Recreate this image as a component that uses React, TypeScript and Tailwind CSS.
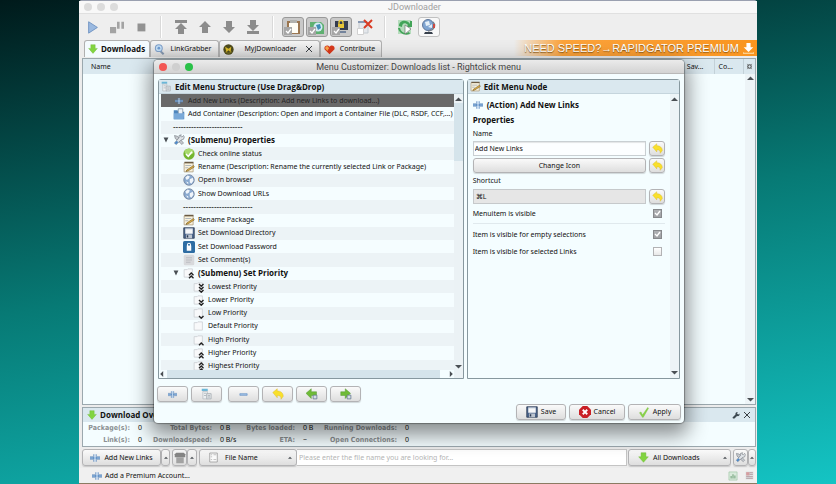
import type { ReactNode } from "react";
import clsx from "clsx";

type IconName =
  | "plus" | "minus" | "container" | "tools" | "check" | "rename" | "globe" | "disk" | "lock" | "comment"
  | "menu" | "undo" | "import" | "export" | "cancel" | "apply" | "download" | "search" | "myjd" | "heart"
  | "play" | "pause" | "stop" | "top" | "up" | "down" | "bottom" | "clipboard" | "reconnect" | "premium"
  | "remove" | "update" | "worldwide" | "trash" | "file" | "wrench" | "close" | "gear" | "chart" | "flag"
  | "priority" | "banner";

const drawings: Record<IconName, ReactNode> = {
  plus: (
    <>
      <path d="M0 6.500h16v3H0z" fill="#7fa9d6" />
      <path d="M0 6h5M0 10h5M11 6h5M11 10h5" stroke="#4a7ab2" />
      <path d="M6 2v12M10 2v12" stroke="#4f7fb8" strokeWidth="1.200" />
      <path d="M7 2h2v12H7z" fill="#b9d3ee" />
    </>
  ),
  minus: <path d="M1.500 6.500h13v3h-13z" fill="#a3c2e6" stroke="#5585c0" />,
  container: (
    <>
      <path d="M1 3h5l1 2h8v10H1z" fill="#4e86bd" />
      <path d="M7 1h6v8H7z" fill="#eef3f8" stroke="#7b8c9c" />
      <path d="M1 7h14l-1 8H1z" fill="#79a9d8" />
    </>
  ),
  tools: (
    <>
      <path d="M2 2l4 1 8 9-2 2-9-8z" fill="#c7cbd0" stroke="#737980" strokeWidth=".8" />
      <path d="M14 2l-2 2-2-1 1-2-3 1v3l-6 7 2 2 7-6 3-1 1-3z" fill="#dfe3e7" stroke="#6a7078" strokeWidth=".8" />
      <path d="M2 12l3-3 2 2-3 3z" fill="#4c88c8" />
    </>
  ),
  check: (
    <>
      <circle cx="8" cy="8" r="7.500" fill="#73b52f" />
      <ellipse cx="8" cy="5" rx="6" ry="4" fill="#a8d96d" />
      <path d="M4 8l3 3 5-6" fill="none" stroke="#fff" strokeWidth="2.200" />
    </>
  ),
  rename: (
    <>
      <path d="M1.500 2.500h12v12h-12z" fill="#f8f1dc" stroke="#a8987a" />
      <path d="M2 1h12v2H2z" fill="#6b5b44" />
      <path d="M3 6h8M3 9h4" stroke="#9aa5b1" />
      <path d="M5 12l9-6 1 2-8 5-3 1z" fill="#e3b345" stroke="#6f5727" strokeWidth=".8" />
    </>
  ),
  globe: (
    <>
      <circle cx="8" cy="8" r="7" fill="#8aaad0" stroke="#6d7d97" />
      <path d="M3 5l3-3 3 1-1 3-3 2zM9 7l4-2 1 4-3 4-2-2zM4 10l3 1v3z" fill="#f0f5fa" />
    </>
  ),
  disk: (
    <>
      <path d="M1 1h14v14H1z" fill="#4b648b" stroke="#27364f" />
      <path d="M3 2h10v7H3z" fill="#f6f7f9" />
      <path d="M3 2h10v1H3z" fill="#a9b6c8" />
      <path d="M4 10h8v5H4z" fill="#bcc4cf" />
      <path d="M5 11h2v3H5z" fill="#273752" />
    </>
  ),
  lock: (
    <>
      <rect width="16" height="16" rx="2" fill="#2e6da3" />
      <path d="M6 7V5a2 2 0 014 0v2" fill="none" stroke="#fff" strokeWidth="1.400" />
      <path d="M5 6h6v7H5z" fill="#fff" />
    </>
  ),
  comment: (
    <>
      <rect x="1" y="1" width="14" height="14" rx="2" fill="#d8d9dc" />
      <path d="M4 5h8M4 8h8M4 11h6" stroke="#b2b4b8" />
    </>
  ),
  menu: (
    <>
      <path d="M1 1h8v3H1z" fill="#6ab7d8" />
      <path d="M2.500 4.500h6v10h-6z" fill="#eceff1" stroke="#b4bbc1" />
      <path d="M7.500 7.500h6v7h-6z" fill="#dfe3e6" stroke="#a4abb1" />
      <path d="M4 7h3M4 10h3M9 10h3M9 12h3" stroke="#a6adb3" />
    </>
  ),
  undo: <path d="M1 6l6-5v3c5 0 8 3 8 7l-3 4c0-4-1-5-5-5v3z" fill="#f9e02b" stroke="#d8ba32" strokeWidth=".6" />,
  import: (
    <>
      <path d="M0 7l7-6v4h7v5H7v4z" fill="#6fbb37" stroke="#4d9430" strokeWidth=".6" />
      <path d="M9.500 9.500h5v5h-5z" fill="#d5dde6" stroke="#62768c" />
    </>
  ),
  export: (
    <>
      <path d="M14 7L7 1v4H1v5h6v4z" fill="#6fbb37" stroke="#4d9430" strokeWidth=".6" />
      <path d="M9.500 9.500h5v5h-5z" fill="#d5dde6" stroke="#62768c" />
    </>
  ),
  cancel: (
    <>
      <path d="M5 0h6l5 5v6l-5 5H5l-5-5V5z" fill="#c92026" />
      <path d="M5 5l6 6M11 5l-6 6" stroke="#fff" strokeWidth="2.400" />
    </>
  ),
  apply: <path d="M2 9l2-1 2 4L13 2l1 1-7 12H6z" fill="#8ad646" stroke="#74bd3d" strokeWidth=".6" />,
  download: <path d="M4.500 1h7v6H15l-7 8-7-8h3.500z" fill="#82d440" stroke="#6bb935" strokeWidth=".6" />,
  search: (
    <>
      <path d="M9 10l5 5" stroke="#8496ad" strokeWidth="3" />
      <circle cx="7" cy="6" r="5" fill="#c4dff5" stroke="#7f9fc8" strokeWidth="1.500" />
      <circle cx="7" cy="6" r="2" fill="#6e9bd0" />
    </>
  ),
  myjd: (
    <>
      <circle cx="8" cy="8" r="7.500" fill="#4d4a1c" />
      <path d="M3 4l5 3 4-3-1 8-3-3-3 3z" fill="#d8b929" />
      <path d="M3 11c3 3 7 3 10 0" stroke="#a5952e" fill="none" />
    </>
  ),
  heart: (
    <>
      <path d="M8 15L1 8C-1 3 5 0 8 4c3-4 9-1 7 4z" fill="#d8391c" />
      <path d="M2 7c-1-4 4-5 5-1l-2 4z" fill="#f9a648" />
    </>
  ),
  play: <path d="M3 2l10 6.500L3 15z" fill="#9ab9e0" stroke="#6b90c0" />,
  pause: <path d="M0 8h7v7H0zM8 2h3v8H8zM13 2h3v8h-3z" fill="#a3a3a3" />,
  stop: <path d="M4 4h9v9H4z" fill="#929292" />,
  top: <path d="M2 1h12v3H2zM8 4l6 6h-3v5H5v-5H2z" fill="#8c8c8c" />,
  up: <path d="M8 2l6 6h-3v6H5V8H2z" fill="#8c8c8c" />,
  down: <path d="M8 14L2 8h3V2h6v6h3z" fill="#8c8c8c" />,
  bottom: <path d="M8 12L2 6h3V1h6v5h3zM2 12h12v3H2z" fill="#8c8c8c" />,
  clipboard: (
    <>
      <path d="M2 2h13v13H2z" fill="#9b7650" />
      <path d="M4 4h9v10H4z" fill="#fffdf5" />
      <path d="M5 1h7v3H5z" fill="#b2b2ae" />
    </>
  ),
  reconnect: (
    <>
      <path d="M1 3h11l3 3v9H5l-4-4z" fill="#5fb071" />
      <circle cx="9" cy="8" r="4.500" fill="#d4ecf4" />
      <path d="M7 6l4-1 1 4-3 2z" fill="#3f8db4" />
    </>
  ),
  premium: (
    <>
      <path d="M2 2h13v9H2z" fill="#343c50" />
      <path d="M6 5V3c0-2 4-2 4 0v2" fill="none" stroke="#f2d23f" strokeWidth="1.300" />
      <path d="M5 5h6v4H5z" fill="#e5c438" />
      <path d="M5 12h8v2H5z" fill="#74849c" />
    </>
  ),
  remove: (
    <>
      <path d="M2 3h9v11H2z" fill="#e4e7eb" stroke="#c4cad0" />
      <path d="M1 2h9v2H1z" fill="#8999b2" />
      <path d="M7 1l8 8M15 1L7 9" stroke="#d93a22" strokeWidth="2" />
      <path d="M0.500 9.500h6v6h-6z" fill="#fff" stroke="#d0d0d0" />
    </>
  ),
  update: (
    <>
      <path d="M1 1h13v14H1z" fill="#b5dcbc" />
      <path d="M2 7c0-6 8-7 11-2V2h2v6H9l2-2C8 3 5 4 5 8zM3 9c1 5 6 6 9 4l1 2c-6 2-11-1-12-6z" fill="#42a458" />
      <path d="M8 6l6 4-6 5z" fill="#fff" stroke="#777" strokeWidth=".7" />
    </>
  ),
  worldwide: (
    <>
      <circle cx="7" cy="6" r="5.500" fill="#7fa5d2" stroke="#60779a" />
      <path d="M4 3l4-1 1 4-4 1zM7 8l4-3v4z" fill="#e5f0f8" />
      <path d="M12 3c4 4 0 9-5 9" fill="none" stroke="#777e89" strokeWidth="1.300" />
      <path d="M12 5h2v4h-2z" fill="#cd4b42" />
      <path d="M4 13h7l1 2H3z" fill="#38404c" />
    </>
  ),
  trash: (
    <>
      <path d="M1 3l2-2h10l2 2v4H1z" fill="#858585" />
      <path d="M3 7h10v8H3z" fill="#a2a2a2" />
    </>
  ),
  file: (
    <>
      <path d="M2.500 1.500h11v13h-11z" fill="#fafafa" stroke="#8c8c8c" />
      <path d="M4 4h2M8 4h4M4 7h2M4 11h2M8 11h4" stroke="#aaa" />
    </>
  ),
  wrench: <path d="M1 13l6-6c-1-3 2-6 5-5l-2 2 1 2 2 1 2-2c1 4-2 6-5 5l-5 5H2z" fill="#3c4850" />,
  close: <path d="M2 2l12 12M14 2L2 14" stroke="#3a3f44" strokeWidth="2" />,
  gear: (
    <>
      <circle cx="8" cy="8" r="4" fill="none" stroke="#555" strokeWidth="2.500" />
      <path d="M3 2l2 3M13 2l-2 3M3 14l2-3M13 14l-2-3" stroke="#555" strokeWidth="1.500" />
    </>
  ),
  chart: (
    <>
      <path d="M1.500 1.500h13v13h-13z" fill="#d9eadc" stroke="#9cc5a2" />
      <path d="M4 12V8h2v4zM7 12V5h2v7zM10 12V7h2v5z" fill="#82ae8a" />
    </>
  ),
  flag: (
    <>
      <path d="M1 1h14v14H1z" fill="#dde3e3" />
      <path d="M2 2h6v6H2z" fill="#d59da0" />
      <path d="M8 3h6M8 6h6M2 10h12M2 13h12" stroke="#b1939a" strokeWidth="1.500" />
    </>
  ),
  priority: <path d="M1.500 3.500h4l1-1h6v11h-11z" fill="#f8f9fa" stroke="#c8ccd0" />,
  banner: (
    <>
      <path d="M5 0h6v6h4l-7 7-7-7h4z" fill="#fff" />
      <path d="M0 13v2h16v-2" fill="none" stroke="#ffe2ae" strokeWidth="1.500" />
    </>
  ),
};

function Icon({ name, className = "size-3" }: { name: IconName; className?: string }) {
  return (
    <svg viewBox="0 0 16 16" className={clsx("shrink-0", className)} aria-hidden="true">
      {drawings[name]}
    </svg>
  );
}

// Folder with up to three chevrons; negative levels point down
function PriorityIcon({ level }: { level: number }) {
  const count = Math.abs(level);
  return (
    <svg viewBox="0 0 16 16" className="size-3 shrink-0" aria-hidden="true">
      {drawings.priority}
      {Array.from({ length: count }, (_, i) => {
        const y = 15 - i * 4;
        return (
          <path
            key={i}
            d={level > 0 ? `M8 ${y}l3-3 3 3` : `M8 ${y - 3}l3 3 3-3`}
            fill="none"
            stroke="#222"
            strokeWidth="1.800"
          />
        );
      })}
    </svg>
  );
}

const arrowPaths = {
  up: "M0 7h10L5 2z",
  down: "M0 3h10L5 8z",
  left: "M7 0v10L2 5z",
  right: "M3 0v10l5-5z",
  open: "M1 1h8L5 9z",
};

function Arrow({ dir, className = "size-2" }: { dir: keyof typeof arrowPaths; className?: string }) {
  return (
    <svg viewBox="0 0 10 10" className={clsx("shrink-0", className)} aria-hidden="true">
      <path d={arrowPaths[dir]} fill="#4a4f54" />
    </svg>
  );
}

interface TreeRow {
  text: string;
  depth: 0 | 1 | 2;
  icon?: IconName;
  priority?: number;
  submenu?: boolean;
  separator?: boolean;
}

const separatorText = "---------------------------";

const rows: TreeRow[] = [
  { text: "Add New Links (Description: Add new Links to download...)", depth: 0, icon: "plus" },
  { text: "Add Container (Description: Open and import a Container File (DLC, RSDF, CCF,...)", depth: 0, icon: "container" },
  { text: separatorText, depth: 0, separator: true },
  { text: "(Submenu) Properties", depth: 0, icon: "tools", submenu: true },
  { text: "Check online status", depth: 1, icon: "check" },
  { text: "Rename (Description: Rename the currently selected Link or Package)", depth: 1, icon: "rename" },
  { text: "Open in browser", depth: 1, icon: "globe" },
  { text: "Show Download URLs", depth: 1, icon: "globe" },
  { text: separatorText, depth: 1, separator: true },
  { text: "Rename Package", depth: 1, icon: "rename" },
  { text: "Set Download Directory", depth: 1, icon: "disk" },
  { text: "Set Download Password", depth: 1, icon: "lock" },
  { text: "Set Comment(s)", depth: 1, icon: "comment" },
  { text: "(Submenu) Set Priority", depth: 1, priority: 2, submenu: true },
  { text: "Lowest Priority", depth: 2, priority: -3 },
  { text: "Lower Priority", depth: 2, priority: -2 },
  { text: "Low Priority", depth: 2, priority: -1 },
  { text: "Default Priority", depth: 2, priority: 0 },
  { text: "High Priority", depth: 2, priority: 1 },
  { text: "Higher Priority", depth: 2, priority: 2 },
  { text: "Highest Priority", depth: 2, priority: 3 },
];

const indents = ["pl-[2px]", "pl-[12px]", "pl-[22px]"];

const boldText = "font-['Open_Sans',sans-serif] text-[8px] font-bold";

const buttonStyle =
  "flex items-center justify-center rounded-[3px] border border-[#b3b3b5] bg-linear-to-b from-[#fafafa] to-[#dedede] shadow-[0_1px_1px_#00000026]";

function TreeItem({ row, index }: { row: TreeRow; index: number }) {
  return (
    <li
      role="treeitem"
      aria-selected={index === 0}
      className={clsx(
        "flex min-h-0 flex-1 items-center whitespace-nowrap",
        indents[row.depth],
        index === 0 ? "bg-[#696969] text-[#262626]" : index % 2 === 0 ? "bg-[#ecf3f6]" : "bg-[#f5fdff]",
        row.submenu && boldText,
      )}
    >
      <span className="flex w-[10px] shrink-0 items-center">{row.submenu && <Arrow dir="open" className="size-[6px]" />}</span>
      {row.icon && <Icon name={row.icon} className={index === 0 ? "mx-[2px] size-2" : "size-3"} />}
      {row.priority !== undefined && <PriorityIcon level={row.priority} />}
      <span className={row.separator ? "text-[8px]" : "pl-[3px]"}>{row.text}</span>
    </li>
  );
}

function PanelHeader({ icon, title }: { icon: IconName; title: string }) {
  return (
    <h2 className={clsx("flex h-[14px] shrink-0 items-center gap-[3px] border-b border-[#c5d5dd] bg-[#dae8ef] px-[2px]", boldText)}>
      <Icon name={icon} className="size-[11px]" />
      {title}
    </h2>
  );
}

function ResetButton({ label }: { label: string }) {
  return (
    <button type="button" aria-label={label} className={clsx(buttonStyle, "h-[15px] w-4 shrink-0")}>
      <Icon name="undo" className="size-[11px]" />
    </button>
  );
}

function CheckRow({ label, checked }: { label: string; checked?: boolean }) {
  return (
    <label className="flex h-[17px] items-center justify-between pr-[3px]">
      {label}
      <span className="relative flex size-[9px]">
        <input
          type="checkbox"
          defaultChecked={checked}
          className="peer size-[9px] appearance-none border border-[#b2b2b4] bg-linear-to-b from-white to-[#e8e8e8] checked:border-[#87898c] checked:from-[#aeb0b3] checked:to-[#a0a2a5]"
        />
        <svg viewBox="0 0 9 9" className="pointer-events-none absolute inset-0 hidden size-[9px] peer-checked:block">
          <path d="M2 4l2 2 3-4" fill="none" stroke="#fff" strokeWidth="1.400" />
        </svg>
      </span>
    </label>
  );
}

function MenuCustomizer() {
  const treeButtons: { icon: IconName; label: string }[] = [
    { icon: "plus", label: "Add action" },
    { icon: "menu", label: "Add submenu" },
    { icon: "minus", label: "Remove" },
    { icon: "undo", label: "Reset" },
    { icon: "import", label: "Import" },
    { icon: "export", label: "Export" },
  ];

  return (
    <section
      role="dialog"
      aria-label="Menu Customizer"
      className="absolute top-[59px] right-[73px] bottom-[60px] left-[75px] flex flex-col overflow-hidden rounded-[4px] bg-[#f4fdff] shadow-[0_0_1px_1px_#00000050,0_8px_20px_4px_#00000070]"
    >
      {/* Title bar */}
      <header className="flex h-[14px] shrink-0 items-center border-b border-[#b9b9b9] bg-linear-to-b from-[#ebebeb] to-[#d3d3d3] pl-[5px]">
        <div className="flex w-[60px] gap-[5px]">
          <span className="size-2 rounded-full bg-[#f35754]" />
          <span className="size-2 rounded-full bg-[#cfcfcf]" />
          <span className="size-2 rounded-full bg-[#2ac148]" />
        </div>
        <h1 className="flex-1 pr-[66px] text-center font-['Roboto',sans-serif] text-[9px] text-[#444]">
          Menu Customizer: Downloads list - Rightclick menu
        </h1>
      </header>

      <div className="flex min-h-0 flex-1 gap-[3px] px-[4px] pt-[5px]">
        {/* Menu tree */}
        <div className="flex min-w-0 flex-[306] flex-col rounded-t-[3px] border border-[#87989f]">
          <PanelHeader icon="menu" title="Edit Menu Structure (Use Drag&Drop)" />
          <div className="flex min-h-0 flex-1">
            <div className="flex min-w-0 flex-1 flex-col">
              <div className="ml-[2px] min-h-0 flex-1 overflow-hidden">
                <ul role="tree" className="flex h-[279px] flex-col">
                  {rows.map((row, i) => (
                    <TreeItem key={i} row={row} index={i} />
                  ))}
                </ul>
              </div>
              <div className="flex h-2 shrink-0 items-center gap-[2px]">
                <Arrow dir="left" className="size-[6px]" />
                <span className="mr-[6px] h-2 flex-1 bg-[#d5e4eb]" />
                <Arrow dir="right" className="size-[6px]" />
              </div>
            </div>
            <div className="flex w-[9px] shrink-0 flex-col items-center bg-[#ebf2f5] pt-[2px] pb-2">
              <Arrow dir="up" className="size-[7px]" />
              <span className="h-[58px] w-full bg-[#d5e4eb]" />
              <span className="flex-1" />
              <Arrow dir="down" className="size-[7px]" />
            </div>
          </div>
        </div>

        {/* Node editor */}
        <div className="flex min-w-0 flex-[213] flex-col rounded-t-[3px] border border-[#87989f]">
          <PanelHeader icon="rename" title="Edit Menu Node" />
          <div className="flex min-h-0 flex-1">
            <form className="flex min-w-0 flex-1 flex-col px-[5px] pt-[3px]">
              <h3 className={clsx("flex h-4 items-center gap-1", boldText)}>
                <Icon name="plus" className="size-[10px]" />
                (Action) Add New Links
              </h3>
              <h4 className={clsx("flex h-[14px] items-center", boldText)}>Properties</h4>
              <label htmlFor="node-name" className="flex h-[14px] items-center">Name</label>
              <div className="flex gap-[3px]">
                <input
                  id="node-name"
                  defaultValue="Add New Links"
                  className="h-[15px] min-w-0 flex-1 border border-[#c9cfd2] bg-[#fcfeff] px-[1px] shadow-[inset_0_1px_1px_#0000001a]"
                />
                <ResetButton label="Reset name" />
              </div>
              <div className="mt-[2px] flex gap-[3px]">
                <button type="button" className={clsx(buttonStyle, "h-[15px] min-w-0 flex-1")}>Change Icon</button>
                <ResetButton label="Reset icon" />
              </div>
              <label htmlFor="node-shortcut" className="flex h-4 items-center">Shortcut</label>
              <div className="flex gap-[3px]">
                <input
                  id="node-shortcut"
                  defaultValue="⌘L"
                  className="h-[15px] min-w-0 flex-1 border border-[#c6c9cb] bg-[#e6e6e6] px-[2px]"
                />
                <ResetButton label="Reset shortcut" />
              </div>
              <div className="border-b border-[#e0e9ed] py-[1px]">
                <CheckRow label="Menuitem is visible" checked />
              </div>
              <div className="pt-[2px]">
                <CheckRow label="Item is visible for empty selections" checked />
                <CheckRow label="Item is visible for selected Links" />
              </div>
            </form>
            <div className="flex w-[9px] shrink-0 flex-col items-center justify-between bg-[#edf4f7] py-[2px]">
              <Arrow dir="up" className="size-[7px]" />
              <Arrow dir="down" className="size-[7px]" />
            </div>
          </div>
        </div>
      </div>

      {/* Tree actions */}
      <div className="mt-[7px] flex gap-[3px] px-[3px]">
        {treeButtons.map(({ icon, label }, i) => (
          <button key={label} aria-label={label} className={clsx(buttonStyle, "h-4 w-[31px]", i === 2 && "ml-[3px]")}>
            <Icon name={icon} className={i === 0 || i === 2 ? "size-[9px]" : "size-3"} />
          </button>
        ))}
      </div>

      <footer className="mt-[2px] mb-[3px] flex justify-end gap-[3px] px-[3px]">
        <button className={clsx(buttonStyle, "h-4 w-[50px] gap-[3px]")}>
          <Icon name="disk" />
          Save
        </button>
        <button className={clsx(buttonStyle, "h-4 w-[56px] gap-[3px]")}>
          <Icon name="cancel" />
          Cancel
        </button>
        <button className={clsx(buttonStyle, "h-4 w-[53px] gap-[3px]")}>
          <Icon name="apply" />
          Apply
        </button>
      </footer>
    </section>
  );
}

interface Tool {
  icon: IconName;
  label: string;
  box?: "pressed" | "raised";
}

const toolGroups: Tool[][] = [
  [
    { icon: "play", label: "Start" },
    { icon: "pause", label: "Pause" },
    { icon: "stop", label: "Stop" },
  ],
  [
    { icon: "top", label: "Move to top" },
    { icon: "up", label: "Move up" },
    { icon: "down", label: "Move down" },
    { icon: "bottom", label: "Move to bottom" },
  ],
  [
    { icon: "clipboard", label: "Clipboard monitoring", box: "pressed" },
    { icon: "reconnect", label: "Auto reconnect", box: "pressed" },
    { icon: "premium", label: "Use premium", box: "pressed" },
    { icon: "remove", label: "Stop mark" },
  ],
  [
    { icon: "update", label: "Reconnect" },
    { icon: "worldwide", label: "Update", box: "raised" },
  ],
];

function Toolbar() {
  return (
    <div role="toolbar" className="flex h-[26px] items-center bg-[#eeeeee] pl-[2px]">
      {toolGroups.map((group, g) => (
        <div key={g} className="flex items-center">
          {g > 0 && <span className="mx-[7px] h-[22px] w-[2px] border-l border-[#d9d9d9] bg-white" />}
          {group.map(({ icon, label, box }) => (
            <button
              key={label}
              aria-label={label}
              className={clsx(
                "relative mx-[1px] flex h-[20px] w-[22px] items-center justify-center rounded-[3px]",
                box === "pressed" && "border border-[#999] bg-[#c9c9c9]",
                box === "raised" && "border border-[#c0c0c0] bg-[#f8f8f8]",
              )}
            >
              <Icon name={icon} className={g === 0 ? "size-[14px]" : "size-4"} />
              {box === "pressed" && (
                <svg viewBox="0 0 8 8" className="absolute bottom-[1px] left-[1px] size-2" aria-hidden="true">
                  <path d="M0 0h8v8H0z" fill="#a6a6a6" />
                  <path d="M2 4l2 2 3-4" fill="none" stroke="#fff" strokeWidth="1.300" />
                </svg>
              )}
            </button>
          ))}
        </div>
      ))}
    </div>
  );
}

const tabs: { icon: IconName; label: string; width: string; closable?: boolean }[] = [
  { icon: "download", label: "Downloads", width: "w-[66px]" },
  { icon: "search", label: "LinkGrabber", width: "w-[69px]" },
  { icon: "myjd", label: "MyJDownloader", width: "w-[101px]", closable: true },
  { icon: "heart", label: "Contribute", width: "w-[62px]" },
];

function TabBar() {
  return (
    <div className="flex h-[18px] items-start justify-between bg-[#ececec]">
      <div role="tablist" className="flex pl-[5px]">
        {tabs.map(({ icon, label, width, closable }, i) => (
          <button
            key={label}
            role="tab"
            aria-selected={i === 0}
            className={clsx(
              "flex h-[17px] items-center rounded-t-[3px] border border-b-0 border-[#b0b0b0] px-[3px]",
              width,
              i === 0 ? "bg-[#f4fbfe]" : "bg-linear-to-b from-[#f4f4f4] to-[#d8d8d8]",
              i === 0 && boldText,
            )}
          >
            <Icon name={icon} className={i === 0 ? "size-[10px]" : "size-[11px]"} />
            <span className="flex-1 pl-[2px] text-center">{label}</span>
            {closable && <Icon name="close" className="mr-[3px] size-[8px]" />}
          </button>
        ))}
      </div>
      <a
        href="#premium"
        className="flex h-4 w-[243px] items-center justify-end gap-1 bg-linear-to-r from-transparent via-[#fba23a] via-20% to-[#f9951f] pr-[3px] font-['Liberation_Sans',sans-serif] text-[11px] whitespace-nowrap text-white [text-shadow:0_1px_1px_#8a5a1a]"
      >
        NEED SPEED?→RAPIDGATOR PREMIUM
        <Icon name="banner" className="size-[11px]" />
      </a>
    </div>
  );
}

function DownloadTable() {
  return (
    <div className="mr-[1px] ml-[3px] flex min-h-0 flex-1 flex-col border border-[#9ba8ae] bg-[#f4fdff]">
      <table className="w-full table-fixed border-collapse">
        <thead>
          <tr className="h-[15px] bg-[#dae8ef] text-left">
            <th className="pl-2 font-normal">Name</th>
            <th className="w-[82px] font-normal">
              <span className="block pr-[10px] text-right">Sav...</span>
            </th>
            <th className="w-[29px] border-l border-[#c3d1d8] pl-1 font-normal">Co...</th>
            <th className="w-[12px] border-l border-[#c3d1d8]" aria-label="Settings">
              <Icon name="gear" className="mx-auto size-[7px]" />
            </th>
          </tr>
        </thead>
      </table>
      <div className="flex w-[10px] flex-1 flex-col items-center justify-between self-end bg-[#edf4f7] py-[1px]">
        <Arrow dir="up" className="size-[7px]" />
        <Arrow dir="down" className="size-[7px]" />
      </div>
    </div>
  );
}

const stats = [
  ["Package(s):", "0"], ["Total Bytes:", "0 B"], ["Bytes loaded:", "0 B"], ["Running Downloads:", "0"],
  ["Link(s):", "0"], ["Downloadspeed:", "0 B/s"], ["ETA:", "~"], ["Open Connections:", "0"],
];

function Overview() {
  return (
    <div className="mt-[2px] mr-[1px] ml-[3px] border border-[#9ba8ae] bg-[#f4fdff]">
      <h2 className={clsx("flex h-[14px] items-center gap-[3px] bg-[#dae8ef] px-1", boldText)}>
        <Icon name="download" className="size-[10px]" />
        <span className="flex-1">Download Overview</span>
        <button aria-label="Settings"><Icon name="wrench" className="size-2" /></button>
        <button aria-label="Close"><Icon name="close" className="size-2" /></button>
      </h2>
      <dl className="grid grid-cols-[47px_20px_62px_31px_52px_24px_78px_auto] leading-[12px] whitespace-nowrap">
        {stats.map(([label, value]) => (
          <div key={label} className="contents">
            <dt className="flex justify-end font-['DejaVu_Sans_Condensed','DejaVu_Sans',sans-serif] font-bold text-[#8b9092]">
              {label}
            </dt>
            <dd className="pl-2">{value}</dd>
          </div>
        ))}
      </dl>
    </div>
  );
}

function BottomBar() {
  return (
    <div className="my-[2px] mr-[1px] ml-[3px] flex h-[17px]">
      <button className={clsx(buttonStyle, "w-[79px] gap-1")}>
        <Icon name="plus" className="size-[10px]" />
        Add New Links
      </button>
      <button aria-label="More add options" className={clsx(buttonStyle, "mr-[2px] w-[9px]")}>
        <Arrow dir="up" className="size-1" />
      </button>
      <button aria-label="Clean up" className={clsx(buttonStyle, "w-[15px]")}>
        <Icon name="trash" />
      </button>
      <button aria-label="More clean up options" className={clsx(buttonStyle, "mr-[2px] w-[10px]")}>
        <Arrow dir="up" className="size-1" />
      </button>
      <button className={clsx(buttonStyle, "w-[98px] gap-[6px] px-2")}>
        <Icon name="file" className="size-[11px]" />
        <span className="flex-1 text-left">File Name</span>
        <Arrow dir="up" className="-mr-1 size-1" />
      </button>
      <input
        aria-label="Filter"
        placeholder="Please enter the file name you are looking for..."
        className="mr-[1px] min-w-0 flex-1 border border-l-0 border-[#c4c4c4] bg-white px-[2px] placeholder:text-[#b4b4b4]"
      />
      <button className={clsx(buttonStyle, "mr-[2px] w-[103px] gap-1 px-[9px]")}>
        <Icon name="download" className="size-[11px]" />
        <span className="flex-1 text-left">All Downloads</span>
        <Arrow dir="up" className="-mr-[6px] size-1" />
      </button>
      <button aria-label="Settings" className={clsx(buttonStyle, "w-[15px]")}>
        <Icon name="tools" className="size-[11px]" />
      </button>
      <button aria-label="More settings" className={clsx(buttonStyle, "w-2")}>
        <Arrow dir="up" className="size-1" />
      </button>
    </div>
  );
}

export default function App() {
  return (
    <div className="flex h-screen flex-col bg-linear-[170deg] from-[#001a1b] via-[#077a75] via-50% to-[#14c4c4] px-[79px] font-['Noto_Sans',sans-serif] text-[7px] leading-[12px] text-[#111]">
      <main className="relative flex min-h-0 flex-1 flex-col rounded-t-[3px] border-t border-b border-t-[#9aa0b0] border-b-[#8b7b62] bg-[#ececec]">
        <header className="flex h-[13px] shrink-0 items-center border-b border-[#e0e0e0] bg-[#f8f8f8] pl-[5px]">
          <div className="flex w-[60px] gap-[5px]">
            <span className="size-2 rounded-full bg-[#dcdcdc]" />
            <span className="size-2 rounded-full bg-[#dcdcdc]" />
            <span className="size-2 rounded-full bg-[#dcdcdc]" />
          </div>
          <div className="flex-1 pr-[72px] text-center font-['Roboto',sans-serif] text-[9px] text-[#a0a0a0]">JDownloader</div>
        </header>
        <Toolbar />
        <TabBar />
        <DownloadTable />
        <Overview />
        <BottomBar />
        <footer className="flex h-[15px] items-center gap-[3px] bg-[#f0f0f0] pr-[3px] pl-[13px]">
          <Icon name="plus" className="size-[10px]" />
          <span className="flex-1">Add a Premium Account...</span>
          <Icon name="chart" className="mr-1 size-[10px]" />
          <Icon name="flag" className="size-[9px]" />
        </footer>
        <MenuCustomizer />
      </main>
    </div>
  );
}
